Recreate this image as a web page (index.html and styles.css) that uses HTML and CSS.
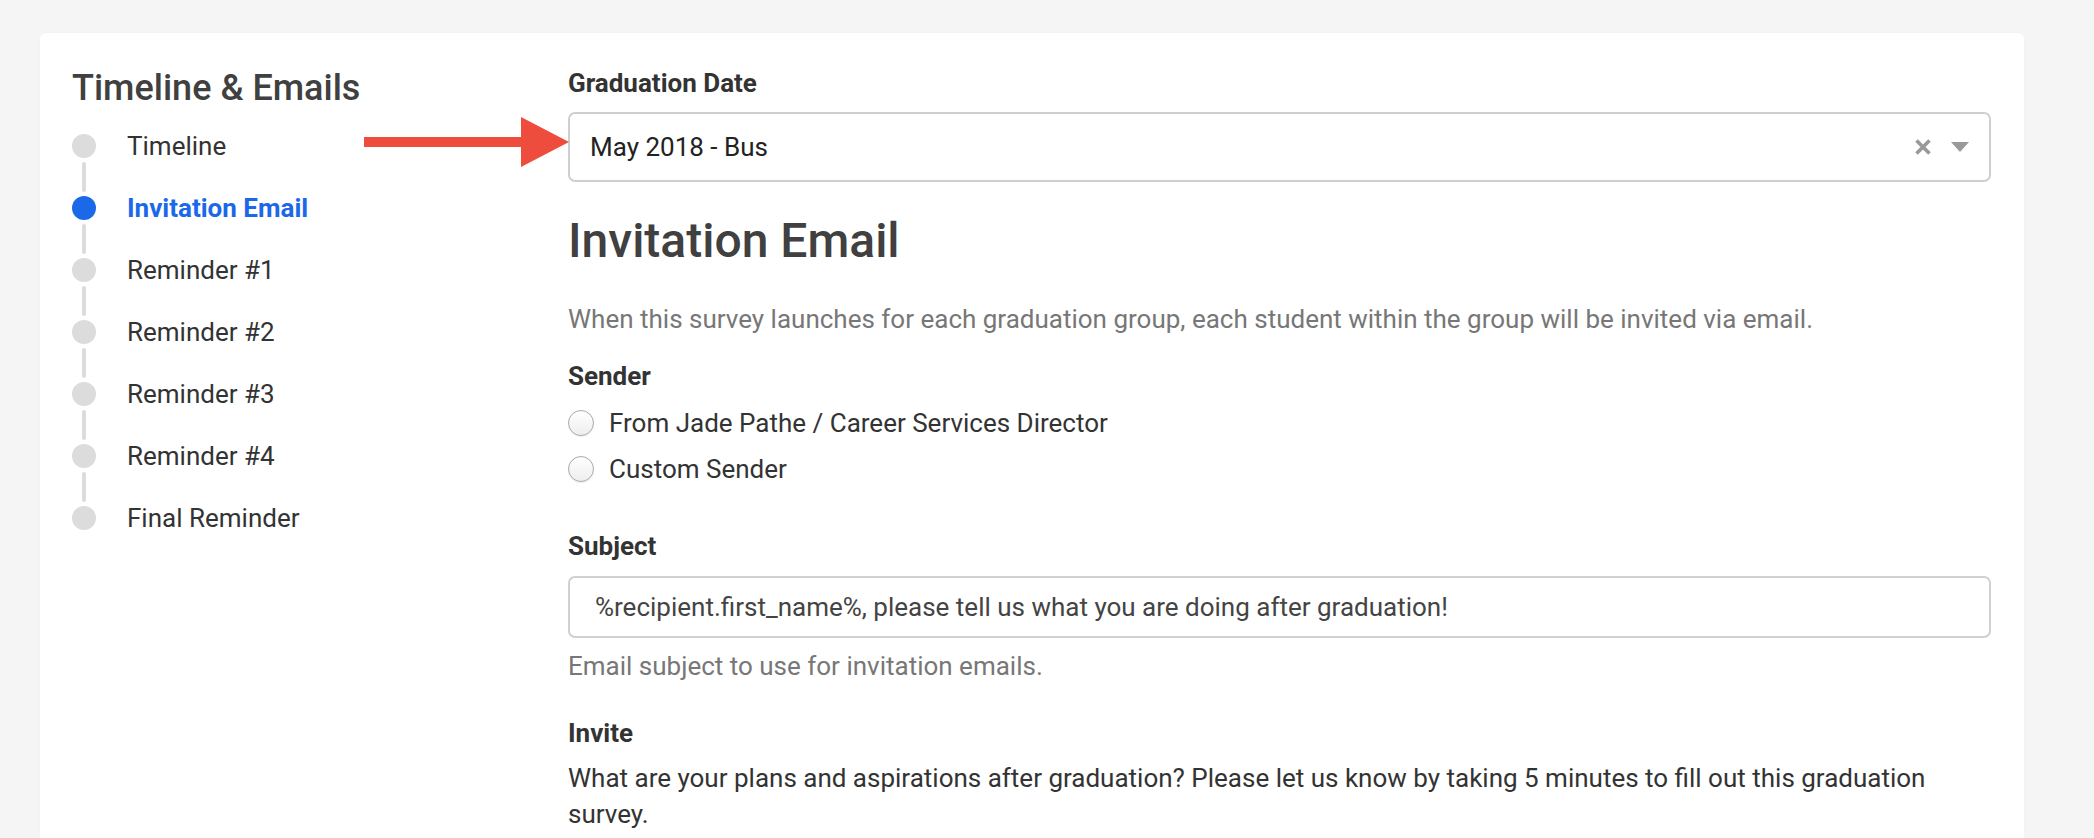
FILE: index.html
```html
<!DOCTYPE html>
<html lang="en">
<head>
    <meta charset="UTF-8">
    <title>Timeline &amp; Emails</title>
    <link rel="stylesheet" href="styles.css">
</head>
<body>
    <div class="card">
        <!-- Left: timeline steps -->
        <aside class="sidebar">
            <h2 class="sidebar-title">Timeline &amp; Emails</h2>
            <ul class="steps">
                <li class="step">
                    <span class="dot"></span>
                    <span class="step-label">Timeline</span>
                    <span class="line"></span>
                </li>
                <li class="step active">
                    <span class="dot"></span>
                    <span class="step-label">Invitation Email</span>
                    <span class="line"></span>
                </li>
                <li class="step">
                    <span class="dot"></span>
                    <span class="step-label">Reminder #1</span>
                    <span class="line"></span>
                </li>
                <li class="step">
                    <span class="dot"></span>
                    <span class="step-label">Reminder #2</span>
                    <span class="line"></span>
                </li>
                <li class="step">
                    <span class="dot"></span>
                    <span class="step-label">Reminder #3</span>
                    <span class="line"></span>
                </li>
                <li class="step">
                    <span class="dot"></span>
                    <span class="step-label">Reminder #4</span>
                    <span class="line"></span>
                </li>
                <li class="step">
                    <span class="dot"></span>
                    <span class="step-label">Final Reminder</span>
                </li>
            </ul>
        </aside>

        <!-- Right: email settings -->
        <main class="content">
            <div class="field-label">Graduation Date</div>
            <div class="select-row">
                <div class="arrow">
                    <span class="arrow-shaft"></span>
                    <span class="arrow-head"></span>
                </div>
                <div class="select">
                    <span class="select-value">May 2018 - Bus</span>
                    <svg class="select-clear" width="18" height="18" viewBox="0 0 18 18">
                        <path d="M2.5 2.5 L15.5 15.5 M15.5 2.5 L2.5 15.5" stroke="#999" stroke-width="3.6" fill="none"/>
                    </svg>
                    <span class="select-caret"></span>
                </div>
            </div>

            <h1 class="section-title">Invitation Email</h1>
            <p class="description">When this survey launches for each graduation group, each student within the group will be invited via email.</p>

            <div class="field-label sender-label">Sender</div>
            <label class="radio-row"><span class="radio"></span>From Jade Pathe / Career Services Director</label>
            <label class="radio-row"><span class="radio"></span>Custom Sender</label>

            <div class="field-label subject-label">Subject</div>
            <div class="text-input">%recipient.first_name%, please tell us what you are doing after graduation!</div>
            <p class="help">Email subject to use for invitation emails.</p>

            <div class="field-label invite-label">Invite</div>
            <p class="invite-text">What are your plans and aspirations after graduation? Please let us know by taking 5 minutes to fill out this graduation survey.</p>
        </main>
    </div>
</body>
</html>
```

FILE: styles.css
```css
body {
    margin: 0;
    padding: 33px 70px 0 40px;
    background-color: #f5f5f5;
    font-family: Roboto, "Liberation Sans", sans-serif;
    color: #333;
    overflow: hidden;
}

.card {
    display: grid;
    grid-template-columns: 496px 1fr;
    background-color: #fff;
    border-radius: 5px;
    padding: 33px 33px 40px 32px;
    min-height: 900px;
    box-shadow: 0 0 2px rgba(0, 0, 0, 0.04);
}

/* Sidebar */
.sidebar-title {
    margin: 0;
    font-size: 36px;
    font-weight: 500;
    line-height: 44px;
    color: #404040;
}

.steps {
    list-style: none;
    margin: 24px 0 0 0;
    padding: 0;
}

.step {
    display: grid;
    grid-template-columns: 24px 1fr;
    column-gap: 31px;
    align-items: center;
}

.dot {
    width: 24px;
    height: 24px;
    border-radius: 50%;
    background-color: #dcdcdc;
}

.step-label {
    font-size: 26px;
    line-height: 24px;
    color: #333;
}

.line {
    grid-column: 1;
    justify-self: center;
    width: 4px;
    height: 30px;
    margin: 4px 0;
    border-radius: 2px;
    background-color: #dcdcdc;
}

.step.active .dot {
    background-color: #1b69e8;
}

.step.active .step-label {
    color: #1b69e8;
    font-weight: 700;
}

/* Content */
.content {
    padding-top: 1px;
}

.field-label {
    font-size: 26px;
    font-weight: 700;
    line-height: 32px;
    color: #333;
}

.select-row {
    position: relative;
    margin-top: 13px;
}

.arrow {
    position: absolute;
    left: -204px;
    top: 5px;
    display: flex;
    align-items: center;
}

.arrow-shaft {
    width: 157px;
    height: 10px;
    background-color: #ee4d3d;
}

.arrow-head {
    width: 0;
    height: 0;
    border-top: 25px solid transparent;
    border-bottom: 25px solid transparent;
    border-left: 48px solid #ee4d3d;
}

.select {
    display: flex;
    align-items: center;
    height: 70px;
    box-sizing: border-box;
    border: 2px solid #cfcfcf;
    border-radius: 7px;
    padding: 0 20px 0 20px;
}

.select-value {
    flex: 1;
    font-size: 26px;
    color: #222;
}

.select-clear {
    margin-right: 19px;
}

.select-caret {
    width: 0;
    height: 0;
    border-left: 9px solid transparent;
    border-right: 9px solid transparent;
    border-top: 10px solid #999;
}

.section-title {
    margin: 31px 0 0 0;
    font-size: 48px;
    font-weight: 500;
    line-height: 56px;
    color: #404040;
}

.description {
    margin: 32px 0 0 0;
    font-size: 26px;
    line-height: 36px;
    color: #777;
}

.sender-label {
    margin-top: 23px;
}

.radio-row {
    display: flex;
    align-items: center;
    height: 46px;
    font-size: 26px;
    color: #333;
}

.sender-label + .radio-row {
    margin-top: 8px;
}

.radio {
    width: 26px;
    height: 26px;
    box-sizing: border-box;
    border: 1px solid #a9a9a9;
    border-radius: 50%;
    background: linear-gradient(#fff, #eee);
    box-shadow: 0 1px 1px rgba(0, 0, 0, 0.08);
    margin-right: 15px;
}

.subject-label {
    margin-top: 38px;
}

.text-input {
    margin-top: 14px;
    height: 62px;
    box-sizing: border-box;
    border: 2px solid #d0d0d0;
    border-radius: 7px;
    padding: 0 25px;
    display: flex;
    align-items: center;
    font-size: 26px;
    color: #444;
}

.help {
    margin: 10px 0 0 0;
    font-size: 26px;
    line-height: 36px;
    color: #777;
}

.invite-label {
    margin-top: 33px;
}

.invite-text {
    margin: 11px 0 0 0;
    font-size: 26px;
    line-height: 36px;
    color: #333;
}
```
